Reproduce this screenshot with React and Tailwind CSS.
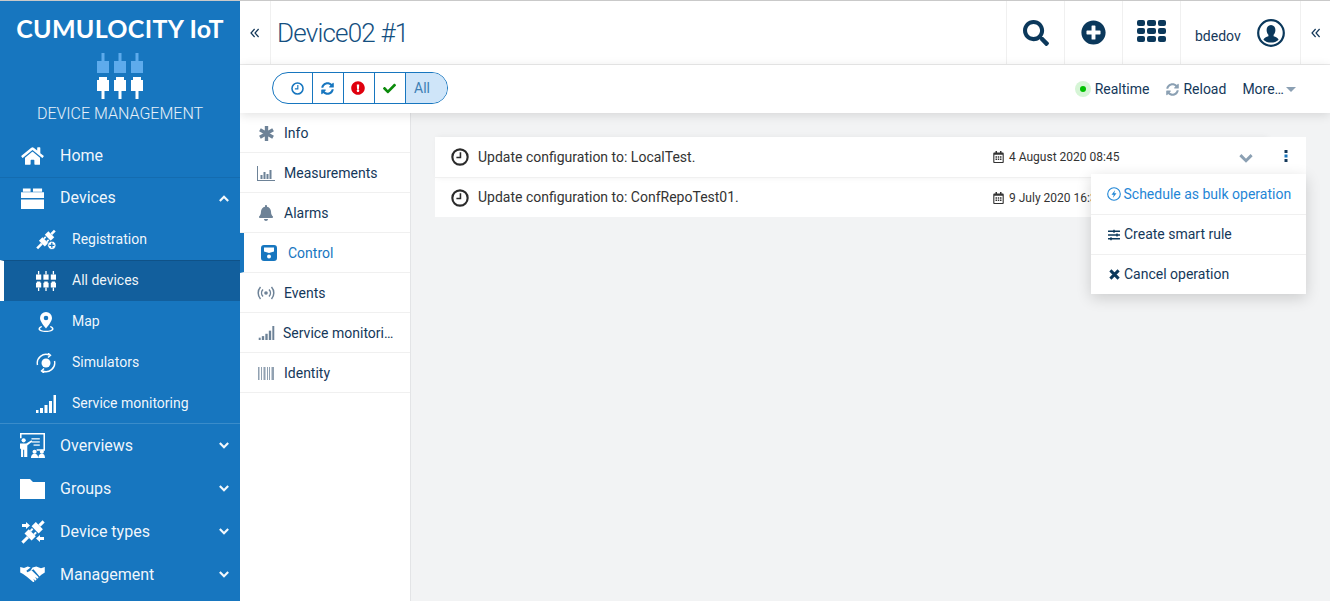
import React from "react";
import {
  FaHome, FaSearch, FaPlusCircle, FaBell, FaSyncAlt,
  FaExclamationCircle, FaCheck, FaSlidersH, FaRegCalendarAlt,
} from "react-icons/fa";

const Ports = ({ className, top = "currentColor" }) => (
  <svg viewBox="0 0 46 46" className={className} fill="currentColor">
    {[0, 17, 34].map((x) => (
      <g key={x} transform={`translate(${x} 0)`}>
        <rect x="4.5" y="0" width="3" height="8" fill={top} />
        <rect x="0" y="8" width="12" height="12" fill={top} />
        <path d="M0 27h2v-3h8v3h2v11H0z" />
        <rect x="4.5" y="38" width="3" height="8" />
      </g>
    ))}
  </svg>
);

const Bars = ({ className }) => (
  <svg viewBox="0 0 20 18" className={className} fill="currentColor">
    <rect x="0" y="15" width="2.5" height="3" />
    <rect x="4" y="13" width="3" height="5" />
    <rect x="8.5" y="10" width="3" height="8" />
    <rect x="13" y="6" width="3" height="12" />
    <rect x="17.5" y="0" width="2.5" height="18" />
  </svg>
);

const Chevrons = ({ className }) => (
  <svg viewBox="0 0 10 10" className={className} fill="none" stroke="currentColor" strokeWidth="1.2">
    <path d="M4.6 1 1 5l3.6 4M8.6 1 5 5l3.6 4" />
  </svg>
);

const Chevron = ({ up, className }) => (
  <svg viewBox="0 0 12 8" className={className} fill="none" stroke="currentColor" strokeWidth="2.600">
    <path d={up ? "M1 7l5-5 5 5" : "M1 1l5 5 5-5"} />
  </svg>
);

const Clock = ({ className }) => (
  <svg viewBox="0 0 16 16" className={className} fill="none" stroke="currentColor">
    <circle cx="8" cy="8" r="6.8" strokeWidth="1.9" />
    <path d="M8.4 3.8v4.6H4.8" strokeWidth="1.4" />
  </svg>
);

// two halves of a connector, tilted so the cord runs bottom left to top right
const PlugPair = () => (
  <g transform="rotate(45 12 12)">
    <rect x="10.500" y="-3" width="3" height="6" />
    <rect x="7" y="3" width="10" height="6" />
    <rect x="8.500" y="10" width="2" height="3" />
    <rect x="13.500" y="10" width="2" height="3" />
    <rect x="7" y="13" width="10" height="6" />
    <rect x="10.500" y="19" width="3" height="8" />
  </g>
);

const Registration = () => (
  <svg viewBox="0 0 24 24" className="w-[21px] h-[21px]" fill="currentColor">
    <PlugPair />
    <circle cx="19" cy="19" r="5" stroke="#1776bf" strokeWidth="1" />
    <path d="M18.200 16h1.600v2.200H22v1.600h-2.200V22h-1.600v-2.200H16v-1.600h2.200z" fill="#1776bf" />
  </svg>
);

const DevicesIcon = () => (
  <svg viewBox="0 0 24 24" className="w-[23px] h-[23px]" fill="currentColor">
    <path d="M2 1.500h8v3.500H2zM12.500 1.500H22v3.500h-9.500z" />
    <path d="M0 5.500h24v6H0zM0 13h24v10H0z" />
  </svg>
);

const Overviews = () => (
  <svg viewBox="0 0 24 24" className="w-[25px] h-[25px]" fill="currentColor">
    <path d="M0 0h24v17h-8v-1.500h6.500V1.500H1.500V5H0z" />
    <rect x="11" y="5" width="8" height="1.200" />
    <rect x="11" y="8" width="8" height="1.200" />
    <rect x="13" y="11" width="6" height="1.200" />
    <circle cx="3.500" cy="7" r="2" />
    <path d="M0 10h6l5-3 .8 1.200L7 12v11H4v-7h-1v7H1v-8H0z" />
    <circle cx="14" cy="18" r="2" />
    <circle cx="21" cy="18" r="2" />
    <path d="M10.500 24c0-2.500 1.500-4 3.500-4s3.500 1.500 3.500 4zM17.500 24c0-2.500 1.500-4 3.500-4s3 1.500 3 4z" />
  </svg>
);

const DeviceTypes = () => (
  <svg viewBox="0 0 24 24" className="w-[24px] h-[24px]" fill="currentColor">
    <PlugPair />
    <path d="M1 4h4V2l4 3.500L5 9V7H1zM23 17h-4v-2l-4 3.500 4 3.500v-2h4z" />
  </svg>
);

const Handshake = () => (
  <svg viewBox="0 0 26 18" className="w-[25px] h-[17px]" fill="currentColor">
    <path d="M0 1l4 1 4-1.500 3 1L6.500 5l1 1.500L12 4.500l7 7c1 1-.5 2.500-1.500 1.500l-1-1-.5.5 1 1c.8 1-.5 2.300-1.500 1.500l-1-1-.5.5.8.9c.7 1-.6 2.100-1.500 1.400L7 11.500 3 8.500 0 7z" />
    <path d="M13 1.500L17 .500l5 2 4-1.500v6l-4 2.500-1.500 1.500L14 3.500l-3.500 2z" />
  </svg>
);

const Simulators = () => (
  <svg viewBox="0 0 20 20" className="w-[20px] h-[20px]" fill="none" stroke="currentColor" strokeWidth="1.400">
    <circle cx="10" cy="10" r="4.500" fill="currentColor" stroke="none" />
    <path d="M1.500 12A8.800 8.800 0 0 1 13.500 2M18.500 8A8.800 8.800 0 0 1 6.500 18" />
    <path d="M12 .200l2.500 2L12 4.500M8 15.500 5.500 18 8 20" />
  </svg>
);

const Pin = () => (
  <svg viewBox="0 0 16 20" className="w-[16px] h-[20px]" fill="currentColor">
    <path fillRule="evenodd" d="M8 0a6 6 0 0 1 6 6c0 3-3.500 7.500-6 10.500C5.500 13.500 2 9 2 6a6 6 0 0 1 6-6zm0 3.700a2.300 2.300 0 1 0 0 4.600 2.300 2.300 0 0 0 0-4.600z" />
    <path d="M3.500 14C1.500 14.700.500 15.700.500 17c0 1.800 3.400 3 7.500 3s7.500-1.200 7.500-3c0-1.300-1-2.300-3-3l-.6 1c1.300.5 2.100 1.200 2.100 2 0 .8-2.800 1.800-6 1.800S2 17.800 2 17c0-.8.800-1.500 2.100-2z" />
  </svg>
);

const SideItem = ({ icon, label, open, short }) => (
  <div className={`flex items-center pl-[20px] pr-[10px] text-[16px] text-white/95 ${short ? "h-[40px]" : "h-[43px]"}`}>
    <span className="w-[25px] flex justify-center text-white shrink-0">{icon}</span>
    <span className="ml-[15px] flex-1">{label}</span>
    {open === true && <Chevron up className="w-[10px] h-[7px] mr-[1px]" />}
    {open === false && <Chevron className="w-[10px] h-[7px] mr-[1px]" />}
  </div>
);

const SubItem = ({ icon, label, active }) => (
  <div className={`flex items-center h-[41px] text-[14px] text-white/95 ${active ? "bg-[#125f9d] border-l-4 border-l-white pl-[32px] pb-[1px] border-t border-t-[#0f5288]" : "pl-[36px]"}`}>
    <span className="w-[20px] flex justify-center text-white shrink-0">{icon}</span>
    <span className="ml-[16px]">{label}</span>
  </div>
);

const NavTab = ({ icon, label, active, tight }) => (
  <div className={`flex items-center h-[40px] pt-[1px] border-b border-[#f0f0f0] text-[14px] ${active ? "border-l-4 border-l-[#1776bf] text-[#1776bf] pl-[15px]" : "text-[#14385a] pl-[16px]"}`}>
    <span className={`w-[20px] flex justify-center shrink-0 ${active ? "text-[#1776bf]" : "text-[#6d8297]"}`}>{icon}</span>
    <span className={tight ? "ml-[7px] whitespace-nowrap" : active ? "ml-[9px]" : "ml-[8px]"}>{label}</span>
  </div>
);

const Row = ({ text, date, chevron }) => (
  <div className={`flex items-center bg-white pl-[16px] text-[14px] text-[#333] ${chevron ? "h-[41px] border-b border-[#f0f0f0]" : "h-[39px]"}`}>
    <Clock className="w-[18px] h-[18px] text-[#2b2b2b] shrink-0" />
    <span className="ml-[9px] w-[515px]">{text}</span>
    <FaRegCalendarAlt className="w-[11px] h-[12px] text-[#333] shrink-0" />
    <span className="ml-[5px] text-[12px] whitespace-nowrap">{date}</span>
    {chevron && <Chevron className="ml-auto mr-[13px] mt-[2px] w-[14px] h-[9px] text-[#8ba0b3]" />}
  </div>
);

export default function App() {
  return (
    <div className="flex h-screen overflow-hidden border-t border-[#c9c9c9] bg-[#f2f3f4] font-['Roboto',sans-serif]">
      <aside className="w-[240px] shrink-0 bg-[#1776bf] text-white">
        <div className="h-[133px] flex flex-col items-center">
          <div className="mt-[13px] font-['Lato',sans-serif] font-bold text-[25px] tracking-[0.3px] leading-[28px] whitespace-nowrap">CUMULOCITY IoT</div>
          <Ports className="mt-[11px] w-[46px] h-[46px]" top="#5eabec" />
          <div className="mt-[5px] text-[16px] font-light leading-[20px] text-white/90">DEVICE MANAGEMENT</div>
        </div>
        <SideItem icon={<FaHome className="w-[23px] h-[20px]" />} label="Home" />
        <div className="border-t border-[#146cb0]">
          <SideItem icon={<DevicesIcon />} label="Devices" open={true} short />
        </div>
        <div className="h-[205px] pt-[1px]">
          <SubItem icon={<Registration />} label="Registration" />
          <SubItem icon={<Ports className="w-[20px] h-[20px]" />} label="All devices" active />
          <SubItem icon={<Pin />} label="Map" />
          <SubItem icon={<Simulators />} label="Simulators" />
          <SubItem icon={<Bars className="w-[20px] h-[18px]" />} label="Service monitoring" />
        </div>
        <div className="border-t border-[#3a8cca]">
          <SideItem icon={<Overviews />} label="Overviews" open={false} />
          <SideItem icon={<svg viewBox="0 0 25 20" className="w-[25px] h-[20px]" fill="currentColor"><path d="M0 0h10l3 3h12v17H0z" /></svg>} label="Groups" open={false} />
          <SideItem icon={<DeviceTypes />} label="Device types" open={false} />
          <SideItem icon={<Handshake />} label="Management" open={false} />
        </div>
      </aside>

      <div className="flex-1 flex flex-col min-w-0 overflow-hidden">
        <header className="h-[64px] shrink-0 bg-white border-b border-[#ececec] flex items-stretch text-[#0b385b]">
          <div className="w-[31px] border-r border-[#f0f0f0] flex items-center justify-center text-[#14385a]">
            <Chevrons className="w-[10px] h-[10px]" />
          </div>
          <h1 className="ml-[6px] flex-1 self-center text-[26px] tracking-[-0.8px] font-light leading-[32px] text-[#144f80]">Device02 #1</h1>
          <div className="w-[58px] border-l border-[#f0f0f0] flex items-center justify-center">
            <FaSearch className="w-[26px] h-[26px]" />
          </div>
          <div className="w-[58px] border-l border-[#f0f0f0] flex items-center justify-center">
            <FaPlusCircle className="w-[25px] h-[25px]" />
          </div>
          <div className="w-[58px] border-l border-[#f0f0f0] flex items-center justify-center">
            <div className="grid grid-cols-3 gap-[2px] -mt-[3px]">
              {Array.from({ length: 9 }).map((_, i) => (
                <span key={i} className="w-[8.500px] h-[6px] bg-[#0b385b] rounded-[2px]" />
              ))}
            </div>
          </div>
          <div className="w-[120px] border-l border-[#f0f0f0] flex items-center pl-[14px]">
            <span className="text-[14px] text-[#14385a] mt-[7px]">bdedov</span>
            <svg viewBox="0 0 28 28" className="ml-[16px] w-[28px] h-[28px]" fill="currentColor">
              <circle cx="14" cy="14" r="12.800" fill="none" stroke="currentColor" strokeWidth="2.200" />
              <path d="M14 6c2.800 0 4.400 2.200 4.400 5 0 2.200-.8 3.800-1.800 4.800v1.400c2 .8 4.400 1.500 5 3.500-2 2-4.700 2.800-7.600 2.800s-5.600-.8-7.600-2.800c.6-2 3-2.700 5-3.500v-1.400c-1-1-1.800-2.600-1.800-4.800 0-2.800 1.600-5 4.400-5z" />
            </svg>
          </div>
          <div className="w-[30px] border-l border-[#f0f0f0] flex items-center justify-center text-[#14385a]">
            <Chevrons className="w-[10px] h-[10px]" />
          </div>
        </header>

        <div className="relative z-10 h-[48px] shrink-0 bg-white shadow-[0_2px_10px_rgba(0,0,0,0.12)] flex items-center pl-[32px] pr-[34px] text-[14px] text-[#14385a]">
          <div className="flex h-[32px] -mt-[2px] border border-[#1776bf] rounded-full overflow-hidden text-[#1776bf]">
            <span className="w-[40px] pl-[9px] flex items-center justify-center border-r border-[#1776bf]"><Clock className="w-[13px] h-[13px]" /></span>
            <span className="w-[31px] pr-[2px] flex items-center justify-center border-r border-[#1776bf]"><FaSyncAlt className="w-[13px] h-[13px]" /></span>
            <span className="w-[31px] pr-[2px] flex items-center justify-center border-r border-[#1776bf]"><FaExclamationCircle className="w-[14px] h-[14px] text-[#e0000e]" /></span>
            <span className="w-[31px] pr-[2px] flex items-center justify-center border-r border-[#1776bf]"><FaCheck className="w-[13px] h-[13px] text-[#0b8a0b]" /></span>
            <span className="w-[41px] pl-[8px] flex items-center bg-[#cfe5f9] text-[14px] text-[#3d7fb5]">All</span>
          </div>
          <span className="ml-auto w-[16px] h-[16px] rounded-full bg-[#d6f5d6] flex items-center justify-center">
            <span className="w-[6px] h-[6px] rounded-full bg-[#00c000]" />
          </span>
          <span className="ml-[4px]">Realtime</span>
          <FaSyncAlt className="ml-[17px] w-[13px] h-[13px] text-[#8ba0b3]" />
          <span className="ml-[4px]">Reload</span>
          <span className="ml-[16px]">More…</span>
          <svg viewBox="0 0 10 5" className="ml-[2px] mt-[1px] w-[10px] h-[5px] text-[#8ba0b3]" fill="currentColor"><path d="M0 0h10L5 5z" /></svg>
        </div>

        <div className="flex-1 flex min-h-0">
          <nav className="w-[171px] shrink-0 bg-white border-r border-[#e3e4e6]">
            <NavTab icon={<svg viewBox="0 0 16 16" className="w-[15px] h-[15px]" stroke="currentColor" strokeWidth="3.600"><path d="M8 0v16M1 4l14 8M15 4 1 12" /></svg>} label="Info" />
            <NavTab icon={<svg viewBox="0 0 18 15" className="w-[18px] h-[15px]" fill="currentColor"><path d="M0 0h1v14h17v1H0z" /><rect x="3.500" y="9" width="2" height="4" /><rect x="6.500" y="6" width="2" height="7" /><rect x="9.500" y="8" width="2" height="5" /><rect x="12.500" y="4" width="2" height="9" /></svg>} label="Measurements" />
            <NavTab icon={<FaBell className="w-[16px] h-[16px]" />} label="Alarms" />
            <NavTab icon={<svg viewBox="0 0 16 16" className="w-[16px] h-[16px]" fill="currentColor"><path fillRule="evenodd" d="M3 0h10a3 3 0 0 1 3 3v10a3 3 0 0 1-3 3H3a3 3 0 0 1-3-3V3a3 3 0 0 1 3-3zm0 2.500v4l5 1.500 5-1.500v-4z" /><circle cx="8" cy="11.500" r="2" fill="#fff" /></svg>} label="Control" active />
            <NavTab icon={<svg viewBox="0 0 18 14" className="w-[18px] h-[14px]" fill="none" stroke="currentColor" strokeWidth="1.500"><circle cx="9" cy="7" r="1.800" fill="currentColor" stroke="none" /><path d="M6 3.500a5 5 0 0 0 0 7M12 3.500a5 5 0 0 1 0 7M3.500 1a9 9 0 0 0 0 12M14.500 1a9 9 0 0 1 0 12" /></svg>} label="Events" />
            <NavTab icon={<Bars className="w-[17px] h-[14px]" />} label="Service monitori…" tight />
            <NavTab icon={<svg viewBox="0 0 16 13" className="w-[16px] h-[13px]" fill="currentColor" opacity="0.75"><path d="M0 0h1.500v13H0zM3 0h1v13H3zM5.500 0h2v13h-2zM9 0h1v13H9zM11 0h1v13h-1zM13.500 0H16v13h-2.500z" /></svg>} label="Identity" />
          </nav>

          <main className="flex-1 relative pl-[24px] pr-[24px] pt-[24px] min-w-0">
            <div className="relative">
              <div className="mr-[40px] relative shadow-[2px_0_6px_rgba(0,0,0,0.06)]">
                <Row text="Update configuration to: LocalTest." date="4 August 2020 08:45" chevron />
              </div>
              <Row text="Update configuration to: ConfRepoTest01." date="9 July 2020 16:36" />
              <div className="absolute right-0 top-0 w-[40px] h-[37px] bg-white flex items-center justify-center">
                <svg viewBox="0 0 4 12" className="w-[4px] h-[12px] text-[#1776bf]" fill="currentColor"><rect x="0.500" y="0" width="3" height="3" fill="#14385a" /><rect x="0.500" y="4.500" width="3" height="3" /><rect x="0.500" y="9" width="3" height="3" fill="#14385a" /></svg>
              </div>
              <div className="absolute right-0 top-[37px] w-[215px] bg-white shadow-[0_4px_14px_rgba(0,0,0,0.16)] text-[14px] text-[#14385a]">
                <div className="h-[41px] border-b border-[#f0f0f0] flex items-center pl-[16px] text-[#1f86d6]">
                  <svg viewBox="0 0 14 14" className="w-[14px] h-[14px]" fill="none" stroke="currentColor"><circle cx="7" cy="7" r="6.300" strokeWidth="1.100" /><path d="M8.200 3 4.500 7.700h2.300L5.800 11l3.700-4.700H7.200z" fill="currentColor" stroke="none" /></svg>
                  <span className="ml-[2.500px] whitespace-nowrap">Schedule as bulk operation</span>
                </div>
                <div className="h-[40px] border-b border-[#f0f0f0] flex items-center pl-[16px]">
                  <FaSlidersH className="w-[14px] h-[12px] text-[#0b385b]" />
                  <span className="ml-[3px]">Create smart rule</span>
                </div>
                <div className="h-[39px] flex items-center pl-[16px]">
                  <svg viewBox="0 0 12 12" className="w-[11px] h-[11px] mx-[1.500px] text-[#0b385b]" stroke="currentColor" strokeWidth="3.200"><path d="M1.500 1.500l9 9M10.500 1.500l-9 9" /></svg>
                  <span className="ml-[3px]">Cancel operation</span>
                </div>
              </div>
            </div>
          </main>
        </div>
      </div>
    </div>
  );
}
